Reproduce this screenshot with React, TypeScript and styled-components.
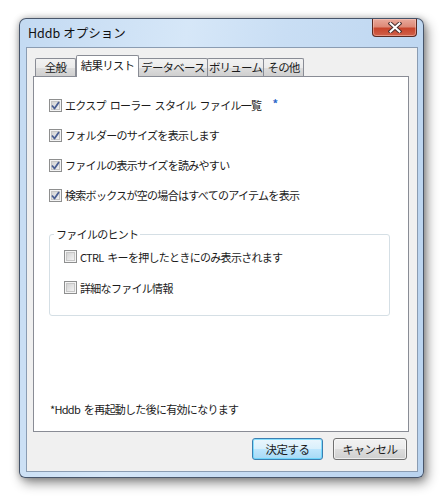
import React from "react";
import styled, { createGlobalStyle, css } from "styled-components";

const Global = createGlobalStyle`
  html, body { margin: 0; padding: 0; background: #ffffff; }
  body { font-family: "Noto Sans CJK JP", "Noto Sans", sans-serif; font-size: 11px; color: #1b1b1b; }
`;

const Page = styled.div`
  padding: 18px 0 0 19px;
  width: 447px;
  height: 501px;
  box-sizing: border-box;
`;

const Window = styled.div`
  width: 405px;
  height: 460px;
  box-sizing: border-box;
  border: 1px solid rgba(30, 40, 60, 0.75);
  border-radius: 7px 7px 6px 6px;
  background: linear-gradient(100deg, #c3daf2 0%, #d6e7f8 35%, #c9def4 55%, #b9d3ef 100%);
  box-shadow: 3px 5px 12px rgba(0, 0, 0, 0.45), 0 0 6px rgba(0, 0, 0, 0.25);
  display: flex;
  flex-direction: column;
  padding: 0 5px 5px 6px;
`;

const TitleBar = styled.div`
  height: 28px;
  display: flex;
  justify-content: space-between;
  align-items: flex-start;
`;

const Title = styled.div`
  font-size: 12.5px;
  line-height: 28px;
  padding-left: 2px;
  color: #111;
`;

const CloseButton = styled.div`
  width: 45px;
  height: 18px;
  margin-right: 1px;
  box-sizing: border-box;
  border: 1px solid #5a2a22;
  border-top: none;
  border-radius: 0 0 4px 4px;
  background: linear-gradient(to bottom, #e9a99b 0%, #dd8a78 45%, #c8452c 55%, #d0614a 100%);
  box-shadow: inset 0 0 0 1px rgba(255, 210, 200, 0.45);
  display: flex;
  align-items: center;
  justify-content: center;
`;

const Client = styled.div`
  flex: 1;
  box-sizing: border-box;
  border: 1px solid #8a9cb2;
  background: #f0f0f0;
  padding: 7px 8px 11px 6px;
  display: flex;
  flex-direction: column;
`;

const TabStrip = styled.div`
  display: flex;
  align-items: flex-end;
  padding-left: 2px;
  height: 21px;
  position: relative;
  z-index: 1;
`;

const Tab = styled.div<{ $w: number; $active?: boolean }>`
  width: ${(p) => p.$w}px;
  box-sizing: border-box;
  border: 1px solid #898c95;
  border-bottom: none;
  border-radius: 2px 2px 0 0;
  font-size: 11.5px;
  letter-spacing: -0.8px;
  white-space: nowrap;
  overflow: hidden;
  text-align: center;
  ${(p) =>
    p.$active
      ? css`
          height: 22px;
          margin-bottom: -1px;
          background: #ffffff;
          line-height: 19px;
        `
      : css`
          height: 18px;
          line-height: 17px;
          background: linear-gradient(to bottom, #f2f2f2 0%, #ebebeb 50%, #dddddd 51%, #cfcfcf 100%);
          margin-left: -1px;
          &:first-child { margin-left: 0; }
        `}
`;

const Panel = styled.div`
  height: 356px;
  box-sizing: border-box;
  border: 1px solid #898c95;
  background: #ffffff;
  padding: 13px 18px 13px 15px;
  display: flex;
  flex-direction: column;
  letter-spacing: -0.7px;
  word-spacing: 2px;
`;

const OptionList = styled.div`
  display: flex;
  flex-direction: column;
`;

const Row = styled.label<{ $h?: number }>`
  height: ${(p) => p.$h ?? 30}px;
  display: flex;
  align-items: center;
  gap: 3px;
  white-space: nowrap;
`;

const Box = styled.span`
  width: 13px;
  height: 13px;
  box-sizing: border-box;
  border: 1px solid #8e8f8f;
  flex: none;
  box-shadow: inset 0 0 0 1px #f4f4f4, inset 0 0 0 2px #c6c6c6;
  background: #f4f4f4 linear-gradient(135deg, #cfcfcf 10%, #f6f6f6 90%);
  background-clip: content-box;
  padding: 2px;
  position: relative;
`;

const Star = styled.span`
  color: #2a66c8;
  font-size: 11px;
  margin-left: 8px;
  position: relative;
  top: -2px;
  font-weight: bold;
`;

const Group = styled.fieldset`
  margin: 17px 0 0 0;
  height: 89px;
  box-sizing: border-box;
  border: 1px solid #d5dfe5;
  border-radius: 3px;
  padding: 0 0 0 14px;
  min-width: 0;
`;

const Legend = styled.legend`
  padding: 0 2px;
  margin-left: -10px;
  font-size: 11px;
  line-height: 14px;
`;

const GroupRows = styled.div`
  display: flex;
  flex-direction: column;
  margin-top: 0;
`;

const Footer = styled.div`
  margin-top: auto;
  line-height: 18px;
  padding-left: 1px;
`;

const ButtonRow = styled.div`
  display: flex;
  justify-content: flex-end;
  gap: 10px;
  margin-top: 6px;
  padding-right: 2px;
`;

const Button = styled.div<{ $w: number; $default?: boolean }>`
  width: ${(p) => p.$w}px;
  height: 22px;
  box-sizing: border-box;
  border: 1px solid ${(p) => (p.$default ? "#3c7fb1" : "#707070")};
  border-radius: 3px;
  background: ${(p) =>
    p.$default
      ? "linear-gradient(to bottom, #eaf6fd 0%, #d9f0fc 50%, #bee6fd 51%, #a7d9f5 100%)"
      : "linear-gradient(to bottom, #f2f2f2 0%, #ebebeb 50%, #dddddd 51%, #cfcfcf 100%)"};
  box-shadow: inset 0 0 0 1px ${(p) => (p.$default ? "#48d2ff99" : "#fcfcfcaa")};
  font-size: 11.5px;
  letter-spacing: -0.5px;
  line-height: 20px;
  text-align: center;
`;

const Check = () => (
  <svg width="9" height="9" viewBox="0 0 9 9" style={{ position: "absolute", left: 1, top: 1 }}>
    <path d="M1 4.5 L3.5 7.5 L8 1" fill="none" stroke="#4a5f93" strokeWidth="1.8" strokeLinejoin="round" />
  </svg>
);

const CheckBox = ({ checked }: { checked?: boolean }) => <Box>{checked && <Check />}</Box>;

const CloseGlyph = () => (
  <svg width="14" height="11" viewBox="0 0 14 11">
    <path d="M2.5 1.5 L11.5 9.5 M11.5 1.5 L2.5 9.5" stroke="#4a3030" strokeWidth="4" strokeLinecap="square" fill="none" />
    <path d="M2.5 1.5 L11.5 9.5 M11.5 1.5 L2.5 9.5" stroke="#ffffff" strokeWidth="2" strokeLinecap="square" fill="none" />
  </svg>
);

export default function App() {
  return (
    <>
      <Global />
      <Page>
        <Window>
          <TitleBar>
            <Title>Hddb オプション</Title>
            <CloseButton>
              <CloseGlyph />
            </CloseButton>
          </TitleBar>
          <Client>
            <TabStrip>
              <Tab $w={41}>全般</Tab>
              <Tab $w={63} $active>結果リスト</Tab>
              <Tab $w={70}>データベース</Tab>
              <Tab $w={57}>ボリューム</Tab>
              <Tab $w={41}>その他</Tab>
            </TabStrip>
            <Panel>
              <OptionList>
                <Row>
                  <CheckBox checked />
                  <span>エクスプ ローラー スタイル ファイル一覧</span>
                  <Star>*</Star>
                </Row>
                <Row>
                  <CheckBox checked />
                  <span>フォルダーのサイズを表示します</span>
                </Row>
                <Row>
                  <CheckBox checked />
                  <span>ファイルの表示サイズを読みやすい</span>
                </Row>
                <Row>
                  <CheckBox checked />
                  <span>検索ボックスが空の場合はすべてのアイテムを表示</span>
                </Row>
              </OptionList>
              <Group>
                <Legend>ファイルのヒント</Legend>
                <GroupRows>
                  <Row $h={31}>
                    <CheckBox />
                    <span>CTRL キーを押したときにのみ表示されます</span>
                  </Row>
                  <Row $h={31}>
                    <CheckBox />
                    <span>詳細なファイル情報</span>
                  </Row>
                </GroupRows>
              </Group>
              <Footer>*Hddb を再起動した後に有効になります</Footer>
            </Panel>
            <ButtonRow>
              <Button $w={71} $default>決定する</Button>
              <Button $w={74}>キャンセル</Button>
            </ButtonRow>
          </Client>
        </Window>
      </Page>
    </>
  );
}
